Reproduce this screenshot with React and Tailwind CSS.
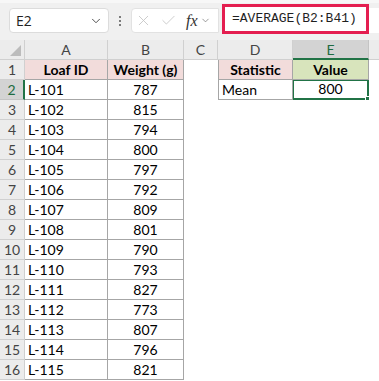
import { ChevronDown, X, Check } from 'lucide-react';

const rows = [
  ['L-101', '787'],
  ['L-102', '815'],
  ['L-103', '794'],
  ['L-104', '800'],
  ['L-105', '797'],
  ['L-106', '792'],
  ['L-107', '809'],
  ['L-108', '801'],
  ['L-109', '790'],
  ['L-110', '793'],
  ['L-111', '827'],
  ['L-112', '773'],
  ['L-113', '807'],
  ['L-114', '796'],
  ['L-115', '821'],
];

const cols = 'grid grid-cols-[25px_83px_76px_34px_75px_76px_1fr]';
const cell = 'h-[20px] box-border leading-[19px] whitespace-nowrap overflow-hidden';
const tb = 'border-r border-b border-[#a6a6a6]';

const Toolbar = () => (
  <div className="h-[40px] bg-[#f0f0f0] border-t-[3px] border-[#f7f7f7] flex items-start relative">
    {/* Name box */}
    <div className="ml-[9px] mt-[5px] w-[100px] h-[25px] bg-white border border-[#dcdcdc] rounded-[4px] flex items-center justify-between pl-[6px] pr-[5px]">
      <span className="text-[14px] text-[#222]" style={{ fontFamily: '"Open Sans", sans-serif' }}>E2</span>
      <ChevronDown className="w-[14px] h-[14px] text-[#444]" strokeWidth={1.6} />
    </div>
    {/* Dots */}
    <div className="w-[22px] mt-[13px] flex flex-col items-center gap-[2px]">
      <span className="w-[2px] h-[2px] bg-[#555] rounded-full" />
      <span className="w-[2px] h-[2px] bg-[#555] rounded-full" />
      <span className="w-[2px] h-[2px] bg-[#555] rounded-full" />
    </div>
    {/* Formula buttons */}
    <div className="mt-[5px] w-[88px] h-[25px] bg-white border border-[#e2e2e2] rounded-l-[4px] flex items-center pl-[3px]">
      <X className="w-[17px] h-[17px] text-[#c4c4c4]" strokeWidth={1.2} />
      <Check className="w-[17px] h-[17px] text-[#c4c4c4] ml-[8px]" strokeWidth={1.2} />
      <span className="text-[16px] italic text-[#333] leading-none ml-[9px]" style={{ fontFamily: '"Liberation Serif", serif' }}>fx</span>
      <ChevronDown className="w-[11px] h-[11px] text-[#777] ml-[2px]" strokeWidth={1.6} />
    </div>
    {/* Formula input */}
    <div className="mt-[1px] ml-[3px] w-[147px] h-[30px] bg-white border-[3px] border-[#e41e50] flex items-center pl-[7px]">
      <span className="text-[13px] text-[#1f1f1f]" style={{ fontFamily: '"Liberation Mono", monospace' }}>=AVERAGE(B2:B41)</span>
    </div>
    <div className="flex-1 mt-[5px] h-[25px] bg-white" />
  </div>
);

const ColHeaders = () => (
  <div className={cols} style={{ fontFamily: 'Lato, sans-serif' }}>
    <div className={`${cell} bg-[#ececec] border-r border-b border-[#d0d0d0] relative`}>
      <div className="absolute right-[3px] bottom-[3px] w-0 h-0 border-l-[11px] border-l-transparent border-b-[11px] border-b-[#bcbcbc]" />
    </div>
    {['A', 'B', 'C', 'D'].map((c) => (
      <div key={c} className={`${cell} bg-[#ececec] border-r border-b border-[#d0d0d0] text-center text-[14px] text-[#444]`}>{c}</div>
    ))}
    <div className={`${cell} bg-[#d3d3d3] border-r border-[#c4c4c4] border-b-2 border-b-[#217346] text-center text-[14px] text-[#1e6b41]`}>E</div>
    <div className={`${cell} bg-[#ececec] border-b border-[#d0d0d0]`} />
  </div>
);

const RowHead = ({ n, active }) => (
  <div
    className={`${cell} text-center text-[14px] border-b ${
      active
        ? 'bg-[#d3d3d3] text-[#1e6b41] border-b-[#c4c4c4] border-r-2 border-r-[#217346]'
        : 'bg-[#ececec] text-[#444] border-[#d0d0d0] border-r'
    }`}
  >
    {n}
  </div>
);

export default function App() {
  return (
    <div className="w-[379px] h-[381px] overflow-hidden bg-white">
      <Toolbar />
      <ColHeaders />
      <div className="text-[14px] text-black" style={{ fontFamily: 'Lato, sans-serif' }}>
        {/* Row 1: headers */}
        <div className={cols}>
          <RowHead n={1} />
          <div className={`${cell} ${tb} bg-[#f2dcdb] text-center font-bold`}>Loaf ID</div>
          <div className={`${cell} ${tb} bg-[#f2dcdb] text-center font-bold`}>Weight (g)</div>
          <div className={cell} />
          <div className={`${cell} ${tb} border-l bg-[#f2dcdb] text-center font-bold`}>Statistic</div>
          <div className={`${cell} ${tb} bg-[#d8e4bc] text-center font-bold`}>Value</div>
          <div className={cell} />
        </div>
        {rows.map(([id, w], i) => (
          <div key={id} className={cols}>
            <RowHead n={i + 2} active={i === 0} />
            <div className={`${cell} ${tb} pl-[3px]`}>{id}</div>
            <div className={`${cell} ${tb} text-center`}>{w}</div>
            <div className={cell} />
            {i === 0 ? (
              <>
                <div className={`${cell} ${tb} border-l pl-[3px]`}>Mean</div>
                <div className={`${cell} relative`}>
                  <div className="absolute -left-[1px] -top-[1px] right-0 bottom-0 border-2 border-[#217346] text-center leading-[16px]">800</div>
                  <div className="absolute -right-[3px] -bottom-[3px] w-[5px] h-[5px] bg-[#217346] border border-white box-content" />
                </div>
              </>
            ) : (
              <>
                <div className={cell} />
                <div className={cell} />
              </>
            )}
            <div className={cell} />
          </div>
        ))}
      </div>
    </div>
  );
}
